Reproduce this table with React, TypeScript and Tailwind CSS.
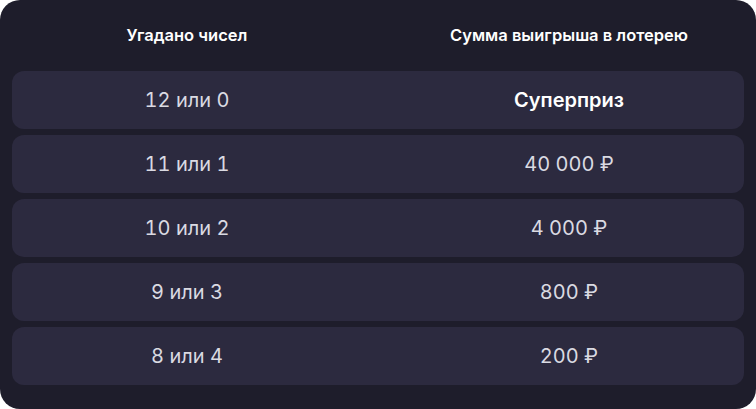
import React from "react";

const rows = [
  ["12 или 0", "Суперприз"],
  ["11 или 1", "40 000 ₽"],
  ["10 или 2", "4 000 ₽"],
  ["9 или 3", "800 ₽"],
  ["8 или 4", "200 ₽"],
];

export default function App() {
  return (
    <div className="w-[756px] h-[409px] bg-white" style={{ fontFamily: "Inter, Roboto, sans-serif" }}>
      <div className="w-full h-full rounded-[20px] bg-[#1e1d2b] px-3 pb-6 flex flex-col">
        <div className="h-[71px] grid grid-cols-2 gap-8 items-center text-white text-[16.5px] font-semibold">
          <div className="text-center">Угадано чисел</div>
          <div className="text-center">Сумма выигрыша в лотерею</div>
        </div>
        <div className="flex flex-col gap-[6px]">
          {rows.map(([a, b], i) => (
            <div key={i} className="h-[58px] rounded-xl bg-[#2c2a3f] grid grid-cols-2 gap-8 items-center text-[20px] text-[#dadae2] tabular-nums">
              <div className="text-center">{a}</div>
              <div className={i === 0 ? "text-center text-white font-semibold" : "text-center"}>{b}</div>
            </div>
          ))}
        </div>
      </div>
    </div>
  );
}
